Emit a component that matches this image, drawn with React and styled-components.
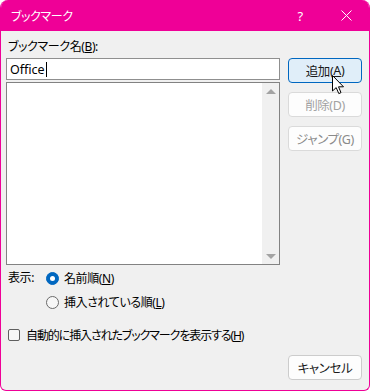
import React from 'react';
import styled, { createGlobalStyle } from 'styled-components';

const GlobalStyle = createGlobalStyle`
  html, body {
    margin: 0;
    padding: 0;
    background: #ffffff;
  }
  body {
    font-family: "Noto Sans", "Noto Sans CJK JP", sans-serif;
    font-size: 12px;
    font-feature-settings: "palt";
    letter-spacing: -0.4px;
    color: #000;
  }
`;

const Window = styled.div`
  position: relative;
  box-sizing: border-box;
  width: 370px;
  height: 391px;
  background: #f0f0f0;
  border: 1px solid #ef0097;
  border-top: none;
  border-radius: 8px 8px 6px 6px;
  overflow: hidden;
  display: flex;
  flex-direction: column;
`;

const TitleBar = styled.div`
  height: 31px;
  flex: none;
  background: #ef0097;
  color: #fff;
  display: flex;
  align-items: center;
  padding-left: 10px;
  font-size: 12px;
`;

const Title = styled.div`
  flex: 1;
`;

const TitleButton = styled.div`
  width: 46px;
  height: 31px;
  display: flex;
  align-items: center;
  justify-content: center;
  font-size: 13px;
`;

const Body = styled.div`
  flex: 1;
  display: flex;
  flex-direction: column;
  padding: 8px 7px 0 5px;
`;

const TopRow = styled.div`
  display: flex;
  gap: 8px;
`;

const LeftCol = styled.div`
  width: 274px;
  display: flex;
  flex-direction: column;
`;

const Label = styled.div`
  height: 16px;
  line-height: 16px;
  padding-left: 2px;
  margin-bottom: 3px;
`;

const Input = styled.div`
  box-sizing: border-box;
  height: 22px;
  background: #fff;
  border: 1px solid #8f8f8f;
  padding-left: 3px;
  display: flex;
  align-items: center;
  font-size: 12.5px;
  letter-spacing: 0;
`;

const Caret = styled.span`
  display: inline-block;
  width: 1px;
  height: 15px;
  background: #000;
  margin-left: 1px;
`;

const List = styled.div`
  box-sizing: border-box;
  margin-top: 2px;
  height: 183px;
  background: #fff;
  border: 1px solid #828282;
  display: flex;
  justify-content: flex-end;
`;

const ScrollBar = styled.div`
  width: 17px;
  background: #f0f0f0;
  display: flex;
  flex-direction: column;
  justify-content: space-between;
  align-items: center;
  padding: 6px 0 5px;
`;

const Arrow = styled.div`
  width: 0;
  height: 0;
  border-left: 5px solid transparent;
  border-right: 5px solid transparent;
  ${(p) => (p.down ? 'border-top: 5px solid #a3a3a3;' : 'border-bottom: 5px solid #a3a3a3;')}
`;

const RightCol = styled.div`
  padding-top: 19px;
  display: flex;
  flex-direction: column;
  gap: 9px;
`;

const Button = styled.div`
  box-sizing: border-box;
  width: 74px;
  height: 25px;
  border-radius: 4px;
  display: flex;
  align-items: center;
  justify-content: center;
  font-size: 12.5px;
  background: ${(p) => (p.primary ? '#e0eef9' : '#fdfdfd')};
  border: 1px solid ${(p) => (p.primary ? '#0067c0' : p.disabled ? '#dadada' : '#cccccc')};
  color: ${(p) => (p.disabled ? p.disabled : '#1a1a1a')};
`;

const RadioGroup = styled.div`
  display: flex;
  margin-top: 5px;
  padding-left: 2px;
`;

const GroupLabel = styled.div`
  width: 38px;
  height: 16px;
  line-height: 16px;
`;

const RadioList = styled.div`
  display: flex;
  flex-direction: column;
  gap: 8px;
`;

const Option = styled.div`
  display: flex;
  align-items: center;
  height: 16px;
  gap: 5px;
`;

const Radio = styled.span`
  box-sizing: border-box;
  width: 13px;
  height: 13px;
  border-radius: 50%;
  display: flex;
  align-items: center;
  justify-content: center;
  background: ${(p) => (p.checked ? '#0067c0' : '#f7f7f7')};
  border: 1px solid ${(p) => (p.checked ? '#0067c0' : '#6a6a6a')};
  &::after {
    content: '';
    display: ${(p) => (p.checked ? 'block' : 'none')};
    width: 5px;
    height: 5px;
    border-radius: 50%;
    background: #fff;
  }
`;

const CheckRow = styled(Option)`
  margin-top: 17px;
  padding-left: 2px;
  gap: 6px;
  letter-spacing: -1.1px;
`;

const Checkbox = styled.span`
  box-sizing: border-box;
  width: 12px;
  height: 12px;
  border-radius: 2px;
  border: 1px solid #5f5f5f;
  background: #f7f7f7;
`;

const Footer = styled.div`
  display: flex;
  justify-content: flex-end;
  margin-top: 12px;
`;

const Pointer = styled.svg`
  position: absolute;
  left: 331px;
  top: 75px;
`;

export default function App() {
  return (
    <>
      <GlobalStyle />
      <Window>
        <TitleBar>
          <Title>ブックマーク</Title>
          <TitleButton>?</TitleButton>
          <TitleButton>
            <svg width="11" height="11" viewBox="0 0 11 11">
              <path d="M0.5 0.5 L10.5 10.5 M10.5 0.5 L0.5 10.5" stroke="#fff" strokeWidth="1" />
            </svg>
          </TitleButton>
        </TitleBar>
        <Body>
          <TopRow>
            <LeftCol>
              <Label>
                ブックマーク名(<u>B</u>):
              </Label>
              <Input>
                Office
                <Caret />
              </Input>
              <List>
                <ScrollBar>
                  <Arrow />
                  <Arrow down />
                </ScrollBar>
              </List>
            </LeftCol>
            <RightCol>
              <Button primary>
                追加(<u>A</u>)
              </Button>
              <Button disabled="#a2a2a2">削除(D)</Button>
              <Button disabled="#8a8a8a">ジャンプ(G)</Button>
            </RightCol>
          </TopRow>
          <RadioGroup>
            <GroupLabel>表示:</GroupLabel>
            <RadioList>
              <Option>
                <Radio checked />
                <span>
                  名前順(<u>N</u>)
                </span>
              </Option>
              <Option>
                <Radio />
                <span>
                  挿入されている順(<u>L</u>)
                </span>
              </Option>
            </RadioList>
          </RadioGroup>
          <CheckRow>
            <Checkbox />
            <span>
              自動的に挿入されたブックマークを表示する(<u>H</u>)
            </span>
          </CheckRow>
          <Footer>
            <Button>キャンセル</Button>
          </Footer>
        </Body>
        <Pointer width="13" height="20" viewBox="0 0 13 20">
          <path
            d="M0.5 0.5 L0.5 16 L4.2 12.6 L6.8 18.6 L9 17.6 L6.5 11.8 L11.5 11.8 Z"
            fill="#fff"
            stroke="#000"
            strokeWidth="1"
            strokeLinejoin="round"
          />
        </Pointer>
      </Window>
    </>
  );
}
